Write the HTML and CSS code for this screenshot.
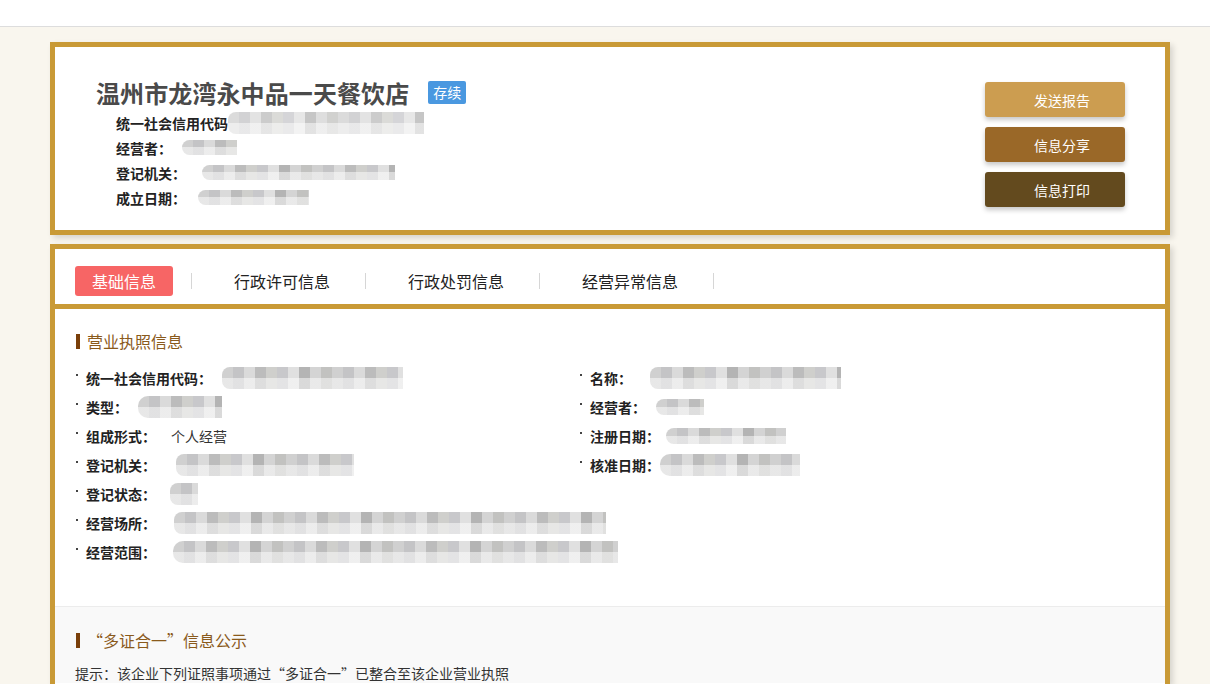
FILE: index.html
```html
<!DOCTYPE html>
<html lang="zh-CN">
<head>
<meta charset="utf-8">
<title>温州市龙湾永中品一天餐饮店</title>
<link rel="stylesheet" href="styles.css">
</head>
<body>
<div class="topbar"></div>
<main class="page">
  <section class="card head-card">
    <div class="head-info">
      <div class="title-row">
        <h1 class="title">温州市龙湾永中品一天餐饮店</h1>
        <span class="badge">存续</span>
      </div>
      <ul class="info-list">
        <li><span class="info-label">统一社会信用代码</span><span class="mosaic m-code"></span></li>
        <li><span class="info-label">经营者：</span><span class="mosaic m-op"></span></li>
        <li><span class="info-label">登记机关：</span><span class="mosaic m-org"></span></li>
        <li><span class="info-label">成立日期：</span><span class="mosaic m-date"></span></li>
      </ul>
    </div>
    <div class="actions">
      <button class="btn btn-report">发送报告</button>
      <button class="btn btn-share">信息分享</button>
      <button class="btn btn-print">信息打印</button>
    </div>
  </section>

  <section class="card detail-card">
    <nav class="tabs">
      <div class="tab tab-first"><span class="tab-active">基础信息</span></div>
      <div class="tab">行政许可信息</div>
      <div class="tab">行政处罚信息</div>
      <div class="tab">经营异常信息</div>
    </nav>

    <div class="section">
      <h2 class="sec-title">营业执照信息</h2>
      <div class="fields">
        <div class="field"><span class="f-label">统一社会信用代码：</span><span class="mosaic v-code"></span></div>
        <div class="field"><span class="f-label">名称：</span><span class="mosaic v-name"></span></div>
        <div class="field"><span class="f-label">类型：</span><span class="mosaic v-type"></span></div>
        <div class="field"><span class="f-label">经营者：</span><span class="mosaic v-op"></span></div>
        <div class="field"><span class="f-label">组成形式：</span><span class="f-value">个人经营</span></div>
        <div class="field"><span class="f-label">注册日期：</span><span class="mosaic v-reg"></span></div>
        <div class="field"><span class="f-label">登记机关：</span><span class="mosaic v-org"></span></div>
        <div class="field"><span class="f-label">核准日期：</span><span class="mosaic v-appr"></span></div>
        <div class="field wide"><span class="f-label">登记状态：</span><span class="mosaic v-state"></span></div>
        <div class="field wide"><span class="f-label">经营场所：</span><span class="mosaic v-place"></span></div>
        <div class="field wide"><span class="f-label">经营范围：</span><span class="mosaic v-scope"></span></div>
      </div>
    </div>

    <div class="section section-grey">
      <h2 class="sec-title">“多证合一”信息公示</h2>
      <p class="tip">提示：该企业下列证照事项通过“多证合一”已整合至该企业营业执照</p>
    </div>
  </section>
</main>
</body>
</html>
```

FILE: styles.css
```css
* { box-sizing: border-box; }
html, body { margin: 0; padding: 0; }
body {
  background: #f9f6ee;
  font-family: "Noto Sans CJK SC", "Liberation Sans", sans-serif;
  color: #333;
  font-size: 14px;
  height: 684px;
  overflow: hidden;
}
.topbar {
  height: 27px;
  background: #fff;
  border-bottom: 1px solid #ddd;
}
.page {
  width: 1120px;
  margin-left: 50px;
  padding-top: 15px;
}
.card {
  background: #fff;
  border: 5px solid #c99a36;
  box-shadow: 3px 3px 6px rgba(0, 0, 0, 0.14);
}

/* head card */
.head-card {
  height: 193px;
  display: flex;
  justify-content: space-between;
  align-items: flex-start;
  padding: 31px 40px 0 41px;
}
.title-row {
  display: flex;
  align-items: center;
  height: 30px;
}
.title {
  margin: 0;
  font-size: 24px;
  line-height: 30px;
  font-weight: bold;
  color: #4a4a4a;
  letter-spacing: 0.1px;
}
.badge {
  margin-left: 19px;
  background: #4a98e0;
  color: #fff;
  font-size: 14px;
  line-height: 23px;
  height: 23px;
  padding: 0 5px;
  border-radius: 2px;
  position: relative;
  top: -1px;
}
.info-list {
  list-style: none;
  margin: 2px 0 0;
  padding: 0 0 0 20px;
}
.info-list li {
  display: flex;
  align-items: center;
  height: 25px;
}
.info-label {
  font-size: 14px;
  font-weight: bold;
  color: #222;
}
.actions {
  display: flex;
  flex-direction: column;
  gap: 10px;
  margin-top: 4px;
}
.btn {
  width: 140px;
  height: 35px;
  border: 0;
  border-radius: 3px;
  color: #fff;
  font-family: inherit;
  font-size: 14px;
  padding: 0 0 0 14px;
  text-align: center;
  box-shadow: 0 3px 5px rgba(0, 0, 0, 0.22);
}
.btn-report { background: #cc9d50; }
.btn-share { background: #9a6828; }
.btn-print { background: #634a1e; }

/* mosaic (blurred values) */
.mosaic {
  display: inline-block;
  height: 22px;
  border-radius: 8px 0 0 8px;
  background:
    linear-gradient(to bottom, rgba(255, 255, 255, 0) 50%, rgba(255, 255, 255, 0.5) 50%),
    repeating-linear-gradient(90deg,
      #d0d0d0 0 11px, #c4c4c6 11px 22px, #dadada 22px 33px, #bcbcbc 33px 44px,
      #cfcfcc 44px 55px, #c8c8cb 55px 66px, #e0e0e0 66px 77px, #b4b4b4 77px 88px,
      #d4d4d4 88px 99px, #c2c2c0 99px 110px);
}
.m-code { width: 196px; margin-left: 0; opacity: 0.75; }
.m-op { width: 55px; margin-left: 10px; height: 15px; }
.m-org { width: 193px; margin-left: 16px; height: 15px; }
.m-date { width: 111px; margin-left: 12px; height: 15px; }

/* detail card */
.detail-card {
  margin-top: 9px;
  border-bottom: 0;
  height: 440px;
  overflow: hidden;
}
.tabs {
  display: flex;
  align-items: center;
  height: 60px;
  padding: 9px 0 0 20px;
  border-bottom: 5px solid #c99a36;
}
.tab {
  font-size: 16px;
  color: #222;
  padding: 0 35px 0 42px;
  line-height: 16px;
  border-right: 1px solid #d6d6d6;
  height: 16px;
  display: flex;
  align-items: center;
}
.tab-first {
  padding: 0 18px 0 0;
}
.tab-active {
  display: inline-block;
  width: 98px;
  height: 30px;
  line-height: 30px;
  text-align: center;
  background: #f76565;
  color: #fff;
  border-radius: 3px;
}
.section {
  padding: 22px 21px 40px 21px;
}
.sec-title {
  margin: 0;
  font-size: 16px;
  line-height: 20px;
  font-weight: normal;
  color: #8a5a1c;
  display: flex;
  align-items: center;
}
.sec-title::before {
  content: "";
  width: 4px;
  height: 15px;
  background: #7a3f0a;
  margin-right: 7px;
}
.fields {
  display: grid;
  grid-template-columns: 504px 1fr;
  grid-auto-rows: 29px;
  margin-top: 12px;
}
.field {
  display: flex;
  align-items: center;
}
.field.wide { grid-column: 1 / -1; }
.field::before {
  content: "";
  width: 2px;
  height: 2px;
  background: #444;
  margin: 0 8px 5px 0;
}
.f-label {
  font-size: 14px;
  font-weight: bold;
  color: #222;
}
.f-value {
  margin-left: 15px;
  color: #333;
}
.v-code { width: 181px; margin-left: 10px; }
.v-name { width: 191px; margin-left: 18px; }
.v-type { width: 84px; margin-left: 10px; border-radius: 10px 0 0 10px; }
.v-op { width: 48px; margin-left: 10px; height: 16px; }
.v-reg { width: 120px; margin-left: 6px; height: 16px; }
.v-appr { width: 140px; margin-left: 0; border-radius: 10px 0 0 10px; }
.v-org { width: 178px; margin-left: 20px; }
.v-state { width: 28px; margin-left: 14px; }
.v-place { width: 432px; margin-left: 18px; }
.v-scope { width: 445px; margin-left: 17px; border-radius: 10px 0 0 10px; }

.section-grey {
  background: #f9f9f9;
  border-top: 1px solid #ececec;
  padding-top: 23px;
  padding-bottom: 0;
}
.tip {
  margin: 13px 0 0 -1px;
  font-size: 14px;
  line-height: 20px;
  color: #333;
}
```
